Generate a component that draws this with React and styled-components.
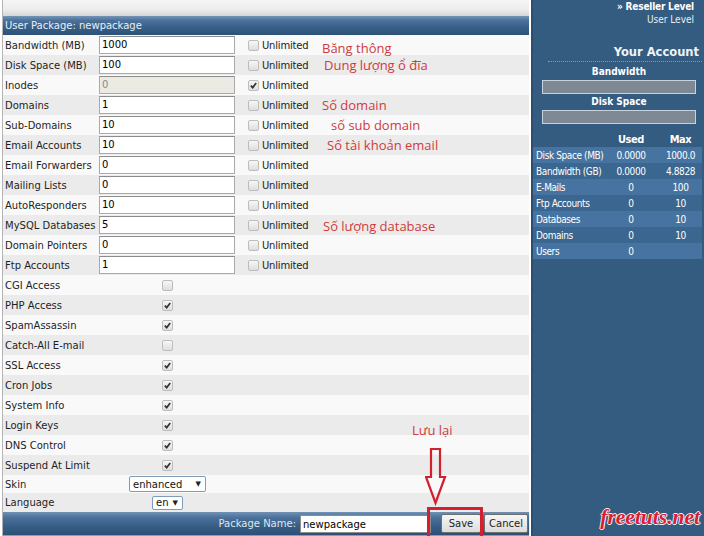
import React from 'react'
import styled, { createGlobalStyle } from 'styled-components'

const GlobalStyle = createGlobalStyle`
  html, body {
    margin: 0;
    padding: 0;
    background: #ffffff;
  }
  body {
    font-family: "DejaVu Sans", Verdana, sans-serif;
  }
`

const limits = [
  { label: 'Bandwidth (MB)', value: '1000', note: 'Băng thông', indent: 4, drop: 3 },
  { label: 'Disk Space (MB)', value: '100', note: 'Dung lượng ổ đĩa', indent: 6 },
  { label: 'Inodes', value: '0', disabled: true, unlimited: true },
  { label: 'Domains', value: '1', note: 'Số domain', indent: 4 },
  { label: 'Sub-Domains', value: '10', note: 'số sub domain', indent: 13 },
  { label: 'Email Accounts', value: '10', note: 'Số tài khoản email', indent: 9 },
  { label: 'Email Forwarders', value: '0' },
  { label: 'Mailing Lists', value: '0' },
  { label: 'AutoResponders', value: '10' },
  { label: 'MySQL Databases', value: '5', note: 'Số lượng database', indent: 5, drop: 1 },
  { label: 'Domain Pointers', value: '0' },
  { label: 'Ftp Accounts', value: '1' },
]

const features = [
  { label: 'CGI Access', on: false },
  { label: 'PHP Access', on: true },
  { label: 'SpamAssassin', on: true },
  { label: 'Catch-All E-mail', on: false },
  { label: 'SSL Access', on: true },
  { label: 'Cron Jobs', on: true },
  { label: 'System Info', on: true },
  { label: 'Login Keys', on: true, note: 'Lưu lại', indent: 94, drop: 5 },
  { label: 'DNS Control', on: true },
  { label: 'Suspend At Limit', on: true },
]

const usage = [
  ['Disk Space (MB)', '0.0000', '1000.0'],
  ['Bandwidth (GB)', '0.0000', '4.8828'],
  ['E-Mails', '0', '100'],
  ['Ftp Accounts', '0', '10'],
  ['Databases', '0', '10'],
  ['Domains', '0', '10'],
  ['Users', '0', ''],
]

const CheckBox = ({ checked }) => (
  <Box>
    {checked && (
      <svg width="9" height="9" viewBox="0 0 9 9">
        <path d="M1.8 4.6 L3.7 6.6 L7.2 2" fill="none" stroke="#333" strokeWidth="1.7" />
      </svg>
    )}
  </Box>
)

const App = () => {
  let row = 0

  return (
    <>
      <GlobalStyle />
      <Page>
        <Main>
          <Panel>
            <TopStrip />
            <PanelHeader>User Package: newpackage</PanelHeader>

            {limits.map((item) => (
              <Row key={item.label} $shade={row++ % 2 === 1}>
                <Label>{item.label}</Label>
                <ValueCell>
                  <TextInput $disabled={item.disabled}>{item.value}</TextInput>
                </ValueCell>
                <UnlimitedCell>
                  <CheckBox checked={item.unlimited} />
                  <UnlimitedText>Unlimited</UnlimitedText>
                </UnlimitedCell>
                <Note $indent={item.indent} $drop={item.drop}>{item.note}</Note>
              </Row>
            ))}

            {features.map((item) => (
              <Row key={item.label} $shade={row++ % 2 === 1}>
                <Label>{item.label}</Label>
                <ValueCell $center>
                  <CheckBox checked={item.on} />
                </ValueCell>
                <UnlimitedCell />
                <Note $indent={item.indent} $drop={item.drop}>{item.note}</Note>
              </Row>
            ))}

            <Row $height={18}>
              <Label>Skin</Label>
              <ValueCell $center>
                <SelectBox $width={77}>
                  enhanced
                  <Arrow>▼</Arrow>
                </SelectBox>
              </ValueCell>
            </Row>

            <Row $shade $height={19}>
              <Label>Language</Label>
              <ValueCell $center>
                <SelectBox $width={31} $small>
                  en
                  <Arrow>▼</Arrow>
                </SelectBox>
              </ValueCell>
            </Row>

            <Footer>
              <FooterLabel>Package Name:</FooterLabel>
              <NameInput>newpackage</NameInput>
              <Button $width={40}>Save</Button>
              <Button $width={44}>Cancel</Button>
            </Footer>
          </Panel>

          <DownArrow width="22" height="60" viewBox="0 0 22 60">
            <path
              d="M6 2 H15 V30 H20 L10.5 56 L1 30 H6 Z"
              fill="none"
              stroke="#d3202e"
              strokeWidth="2.2"
              strokeLinejoin="miter"
            />
          </DownArrow>
          <Highlight />
        </Main>

        <Sidebar>
          <LevelLinks>
            <strong>» Reseller Level</strong>
            <span>User Level</span>
          </LevelLinks>

          <AccountTitle>Your Account</AccountTitle>
          <Dots />

          <BarTitle>Bandwidth</BarTitle>
          <Meter />
          <BarTitle>Disk Space</BarTitle>
          <Meter />

          <StatsTable>
            <StatRow $head>
              <span />
              <StatNum>Used</StatNum>
              <StatNum $max>Max</StatNum>
            </StatRow>
            {usage.map(([name, used, max], i) => (
              <StatRow key={name} $light={i % 2 === 0}>
                <StatName>{name}</StatName>
                <StatNum>{used}</StatNum>
                <StatNum $max>{max}</StatNum>
              </StatRow>
            ))}
          </StatsTable>

          <Watermark>freetuts.net</Watermark>
        </Sidebar>
      </Page>
    </>
  )
}

export default App

const Page = styled.div`
  display: flex;
  width: 704px;
  height: 536px;
  overflow: hidden;
`

const Main = styled.div`
  position: relative;
  width: 531px;
  padding-left: 2px;
  box-sizing: border-box;
  background: #ffffff;
`

const Panel = styled.div`
  display: flex;
  flex-direction: column;
  width: 526px;
  border-left: 1px solid #b4b4b4;
  height: 536px;
`

const TopStrip = styled.div`
  height: 16px;
  background: linear-gradient(to bottom, #f6f6f6 0%, #ececec 60%, #d6d6d6 100%);
`

const PanelHeader = styled.div`
  height: 19px;
  line-height: 19px;
  padding-left: 2px;
  font-size: 10px;
  color: #e9eff5;
  background: linear-gradient(to bottom, #7395b7 0%, #4d739b 22%, #3a6189 55%, #2c5177 100%);
`

const Row = styled.div`
  display: grid;
  grid-template-columns: 96px 137px 82px 1fr;
  align-items: center;
  height: ${(p) => p.$height || 20}px;
  background: ${(p) => (p.$shade ? '#ebebeb' : '#f9f9f9')};
`

const Label = styled.div`
  padding-left: 2px;
  font-size: 10px;
  color: #1e1e1e;
  white-space: nowrap;
`

const ValueCell = styled.div`
  display: flex;
  align-items: center;
  justify-content: ${(p) => (p.$center ? 'center' : 'flex-start')};
`

const TextInput = styled.div`
  width: 136px;
  height: 18px;
  box-sizing: border-box;
  padding-left: 2px;
  line-height: 16px;
  font-size: 10px;
  color: ${(p) => (p.$disabled ? '#8a8a8a' : '#000000')};
  background: ${(p) => (p.$disabled ? '#ebebe4' : '#ffffff')};
  border: 1px solid #a9a9a9;
  border-top-color: #8b8b8b;
`

const UnlimitedCell = styled.div`
  display: flex;
  align-items: center;
  padding-left: 12px;
`

const Box = styled.span`
  display: flex;
  align-items: center;
  justify-content: center;
  width: 11px;
  height: 11px;
  box-sizing: border-box;
  border: 1px solid #bdbdbd;
  border-radius: 2px;
  background: linear-gradient(to bottom, #f7f7f7, #dedede);
`

const UnlimitedText = styled.span`
  margin-left: 3px;
  font-size: 10px;
  letter-spacing: -0.2px;
  color: #222222;
`

const Note = styled.div`
  padding-left: ${(p) => p.$indent || 0}px;
  transform: translateY(${(p) => p.$drop || 0}px);
  font-family: "Open Sans", "Noto Sans", sans-serif;
  font-size: 13px;
  line-height: 16px;
  color: #d13a3d;
  white-space: nowrap;
`

const SelectBox = styled.div`
  display: flex;
  align-items: center;
  justify-content: space-between;
  width: ${(p) => p.$width}px;
  height: ${(p) => (p.$small ? 14 : 16)}px;
  box-sizing: border-box;
  padding: 0 4px 0 3px;
  font-size: 10px;
  color: #111111;
  background: #ffffff;
  border: 1px solid #7f9db9;
  border-radius: 2px;
`

const Arrow = styled.span`
  font-size: 7px;
  color: #222222;
`

const Footer = styled.div`
  display: flex;
  align-items: center;
  justify-content: flex-end;
  height: 23px;
  padding-right: 1px;
  background: linear-gradient(to bottom, #6f91b4 0%, #4b719a 25%, #385f87 60%, #2b5076 100%);
  box-shadow: 0 1px 1px #9a9a9a;
`

const FooterLabel = styled.span`
  margin-right: 4px;
  font-size: 10px;
  color: #dfe6ee;
`

const NameInput = styled.div`
  width: 131px;
  height: 18px;
  box-sizing: border-box;
  padding-left: 2px;
  line-height: 17px;
  font-size: 10px;
  color: #000000;
  background: #ffffff;
  border: 1px solid #8c8c8c;
  margin-right: 7px;
`

const Button = styled.div`
  width: ${(p) => p.$width}px;
  height: 19px;
  box-sizing: border-box;
  margin-left: 3px;
  line-height: 17px;
  text-align: center;
  font-size: 10px;
  color: #222222;
  background: linear-gradient(to bottom, #f6f6f6, #dcdcdc);
  border: 1px solid #6f6f6f;
  border-radius: 2px;
`

const DownArrow = styled.svg`
  position: absolute;
  left: 425px;
  top: 447px;
`

const Highlight = styled.div`
  position: absolute;
  left: 427px;
  top: 507px;
  width: 56px;
  height: 32px;
  box-sizing: border-box;
  border: 3px solid #d3202e;
`

const Sidebar = styled.div`
  display: flex;
  flex-direction: column;
  flex: 1;
  background: #345b80;
  border-left: 2px solid #2c4e70;
  color: #ffffff;
  font-family: "DejaVu Sans Condensed", "DejaVu Sans", sans-serif;
`

const LevelLinks = styled.div`
  display: flex;
  flex-direction: column;
  align-items: flex-end;
  padding-right: 10px;
  font-size: 10px;
  line-height: 13px;

  strong {
    letter-spacing: -0.2px;
  }

  span {
    color: #e8eef4;
  }
`

const AccountTitle = styled.div`
  margin-top: 18px;
  padding-right: 5px;
  text-align: right;
  font-family: "DejaVu Sans", sans-serif;
  font-weight: bold;
  font-size: 11.5px;
  line-height: 16px;
  color: #eef3f8;
`

const Dots = styled.div`
  margin: 1px 2px 3px 15px;
  border-bottom: 1px dotted #7d9dbb;
`

const BarTitle = styled.div`
  text-align: center;
  padding: 0 8px 0 9px;
  font-weight: bold;
  font-size: 10px;
  line-height: 13px;
`

const Meter = styled.div`
  height: 14px;
  margin: 2px 8px 1px 9px;
  box-sizing: border-box;
  background: #7e8993;
  border: 1px solid #c6d3de;
`

const StatsTable = styled.div`
  margin: 6px 2px 0 0;
  font-size: 10px;
  letter-spacing: -0.4px;
`

const StatRow = styled.div`
  display: grid;
  grid-template-columns: 74px 48px 1fr;
  align-items: center;
  height: 16px;
  font-weight: ${(p) => (p.$head ? 'bold' : 'normal')};
  font-size: ${(p) => (p.$head ? '11px' : '10px')};
  background: ${(p) => (p.$head ? 'transparent' : p.$light ? '#4673a0' : '#3b6690')};
`

const StatName = styled.span`
  padding-left: 3px;
  white-space: nowrap;
`

const StatNum = styled.span`
  text-align: center;
  padding-left: ${(p) => (p.$max ? 4 : 0)}px;
`

const Watermark = styled.div`
  margin-top: auto;
  padding: 0 4px 6px 0;
  text-align: right;
  font-family: "Liberation Serif", "DejaVu Serif", serif;
  font-style: italic;
  font-weight: bold;
  font-size: 21.5px;
  color: #dc1c34;
  text-shadow: 1px 0 0 #f2f2f2, -1px 0 0 #f2f2f2, 0 1px 0 #f2f2f2, 0 -1px 0 #f2f2f2;
`
